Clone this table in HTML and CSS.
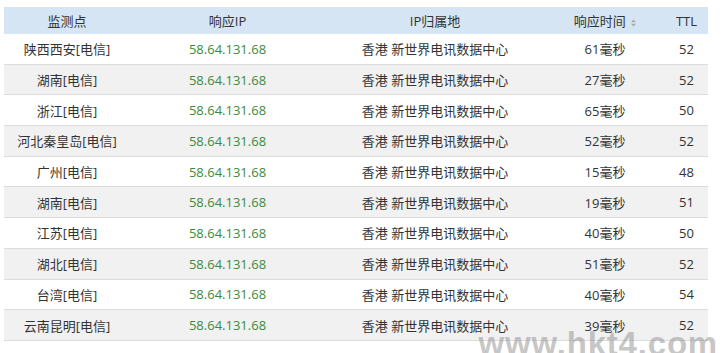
FILE: index.html
```html
<!DOCTYPE html>
<html lang="zh-CN">
<head>
    <meta charset="UTF-8">
    <link rel="stylesheet" href="styles.css">
    <title>Ping 检测</title>
</head>
<body>
  <div class="wrap">
    <table id="pingTable">
      <tr>
        <th class="c1">监测点</th>
        <th class="c2">响应IP</th>
        <th class="c3">IP归属地</th>
        <th class="c4">响应时间
          <svg class="sortIcon" width="5" height="8" viewBox="0 0 5 8"><path d="M0 3.2 L2.5 0.5 L5 3.2 Z M0 4.8 L2.5 7.5 L5 4.8 Z" fill="#aaa"/></svg>
        </th>
        <th class="c5">TTL</th>
      </tr>
      <tr><td>陕西西安[电信]</td><td class="ip">58.64.131.68</td><td>香港 新世界电讯数据中心</td><td>61毫秒</td><td>52</td></tr>
      <tr><td>湖南[电信]</td><td class="ip">58.64.131.68</td><td>香港 新世界电讯数据中心</td><td>27毫秒</td><td>52</td></tr>
      <tr><td>浙江[电信]</td><td class="ip">58.64.131.68</td><td>香港 新世界电讯数据中心</td><td>65毫秒</td><td>50</td></tr>
      <tr><td>河北秦皇岛[电信]</td><td class="ip">58.64.131.68</td><td>香港 新世界电讯数据中心</td><td>52毫秒</td><td>52</td></tr>
      <tr><td>广州[电信]</td><td class="ip">58.64.131.68</td><td>香港 新世界电讯数据中心</td><td>15毫秒</td><td>48</td></tr>
      <tr><td>湖南[电信]</td><td class="ip">58.64.131.68</td><td>香港 新世界电讯数据中心</td><td>19毫秒</td><td>51</td></tr>
      <tr><td>江苏[电信]</td><td class="ip">58.64.131.68</td><td>香港 新世界电讯数据中心</td><td>40毫秒</td><td>50</td></tr>
      <tr><td>湖北[电信]</td><td class="ip">58.64.131.68</td><td>香港 新世界电讯数据中心</td><td>51毫秒</td><td>52</td></tr>
      <tr><td>台湾[电信]</td><td class="ip">58.64.131.68</td><td>香港 新世界电讯数据中心</td><td>40毫秒</td><td>54</td></tr>
      <tr><td>云南昆明[电信]</td><td class="ip">58.64.131.68</td><td>香港 新世界电讯数据中心</td><td>39毫秒</td><td>52</td></tr>
    </table>
    <div class="watermark">www.hkt4.com</div>
  </div>
</body>
</html>
```

FILE: styles.css
```css
body {
  margin: 0;
  background: #fff;
  font-family: "Open Sans", "Noto Sans CJK SC", sans-serif;
  font-size: 13px;
  color: #333;
}

.wrap {
  position: relative;
  height: 353px;
  padding: 7px 14px 0 4px;
  box-sizing: border-box;
  overflow: hidden;
}

#pingTable {
  width: 100%;
  border-collapse: collapse;
  table-layout: fixed;
}

#pingTable th {
  height: 27px;
  padding: 0;
  font-weight: normal;
  background-color: #d5e5f4;
  text-align: center;
}

#pingTable td {
  height: 29.7px;
  padding: 0;
  text-align: center;
  border-bottom: 1px solid #dcdcdc;
}

#pingTable tr:nth-child(odd) td { background-color: #f1f1f1; }

#pingTable .c1 { width: 126px; }
#pingTable .c2 { width: 195px; }
#pingTable .c3 { width: 220px; }
#pingTable .c4 { width: 120px; }

#pingTable td.ip { color: #3d8b3d; }

.sortIcon {
  margin-left: 2px;
  vertical-align: middle;
}

.watermark {
  position: absolute;
  right: 4px;
  bottom: -7px;
  font-family: "Liberation Sans", Arial, sans-serif;
  font-weight: bold;
  font-size: 33px;
  line-height: 33px;
  letter-spacing: 0.8px;
  color: rgba(150, 150, 150, 0.55);
}
```
